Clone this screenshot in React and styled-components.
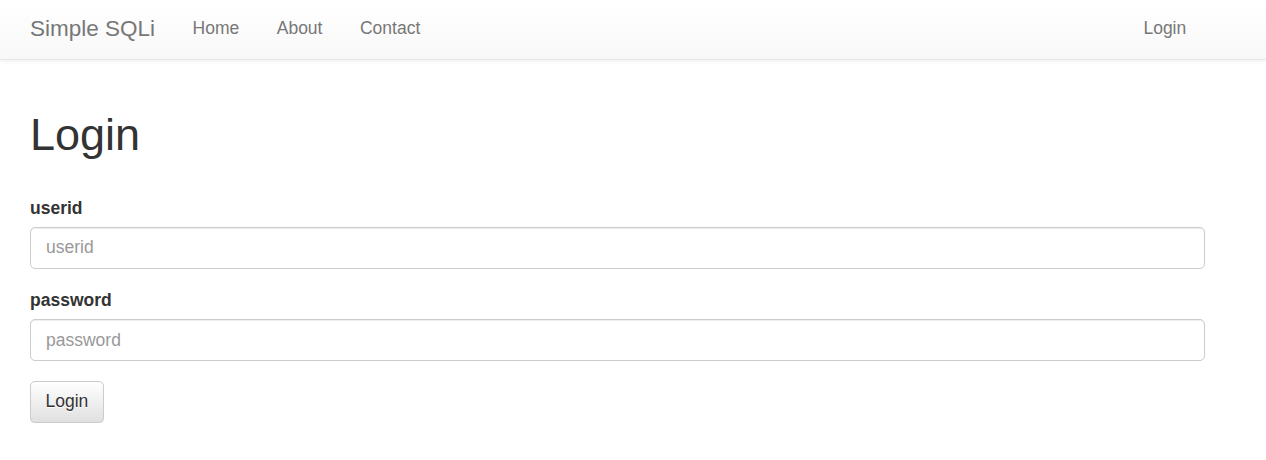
import React from 'react'
import styled, { createGlobalStyle } from 'styled-components'

const GlobalStyle = createGlobalStyle`
  * {
    box-sizing: border-box;
  }
  body {
    margin: 0;
    background: #fff;
    color: #333;
    font-family: "Liberation Sans", Arial, Helvetica, sans-serif;
    font-size: 17.5px;
    line-height: 1.42857;
  }
`

const Navbar = styled.nav`
  height: 60px;
  background-image: linear-gradient(to bottom, #fff 0, #f8f8f8 100%);
  border-bottom: 1px solid #e7e7e7;
  box-shadow: inset 0 1px 0 rgba(255, 255, 255, 0.15), 0 1px 5px rgba(0, 0, 0, 0.075);
`

const NavInner = styled.div`
  width: 1193.75px;
  margin-left: 11.25px;
  height: 100%;
  padding-bottom: 2px;
  display: flex;
  align-items: center;
`

const Brand = styled.a`
  padding: 0 18.75px;
  font-size: 22.5px;
  color: #777;
  text-decoration: none;
  line-height: 53px;
`

const NavList = styled.ul`
  display: flex;
  list-style: none;
  margin: 0;
  padding: 0;
  margin-left: ${(p) => (p.$right ? 'auto' : '0')};
`

const NavLink = styled.a`
  display: block;
  padding: 0 18.75px;
  line-height: 53px;
  color: #777;
  text-decoration: none;
`

const Container = styled.main`
  width: 1175px;
  margin-left: 30px;
  padding-top: 50px;
`

const Title = styled.h1`
  margin: 0 0 36px;
  font-size: 45px;
  font-weight: 500;
  line-height: 1.1;
  color: #333;
`

const FormGroup = styled.div`
  margin-bottom: 19.5px;
`

const Label = styled.label`
  display: block;
  margin-bottom: 6.25px;
  font-weight: bold;
  color: #333;
`

const Input = styled.input`
  display: block;
  width: 100%;
  height: 42px;
  padding: 0 15px;
  font-family: inherit;
  font-size: 17.5px;
  color: #555;
  background: #fff;
  border: 1px solid #ccc;
  border-radius: 5px;
  box-shadow: inset 0 1px 1px rgba(0, 0, 0, 0.075);
  outline: none;

  &::placeholder {
    color: #999;
  }
`

const Button = styled.button`
  height: 42px;
  padding: 0 14.5px;
  font-family: inherit;
  font-size: 17.5px;
  color: #333;
  background-image: linear-gradient(to bottom, #fff 0, #e0e0e0 100%);
  border: 1px solid #ccc;
  border-radius: 5px;
  text-shadow: 0 1px 0 #fff;
  box-shadow: inset 0 1px 0 rgba(255, 255, 255, 0.15), 0 1px 1px rgba(0, 0, 0, 0.075);
  cursor: pointer;
`

export default function App() {
  return (
    <>
      <GlobalStyle />
      <Navbar>
        <NavInner>
          <Brand href="#">Simple SQLi</Brand>
          <NavList>
            <li><NavLink href="#">Home</NavLink></li>
            <li><NavLink href="#">About</NavLink></li>
            <li><NavLink href="#">Contact</NavLink></li>
          </NavList>
          <NavList $right>
            <li><NavLink href="#">Login</NavLink></li>
          </NavList>
        </NavInner>
      </Navbar>
      <Container>
        <Title>Login</Title>
        <form onSubmit={(e) => e.preventDefault()}>
          <FormGroup>
            <Label htmlFor="userid">userid</Label>
            <Input id="userid" type="text" placeholder="userid" />
          </FormGroup>
          <FormGroup>
            <Label htmlFor="password">password</Label>
            <Input id="password" type="password" placeholder="password" />
          </FormGroup>
          <Button type="submit">Login</Button>
        </form>
      </Container>
    </>
  )
}
